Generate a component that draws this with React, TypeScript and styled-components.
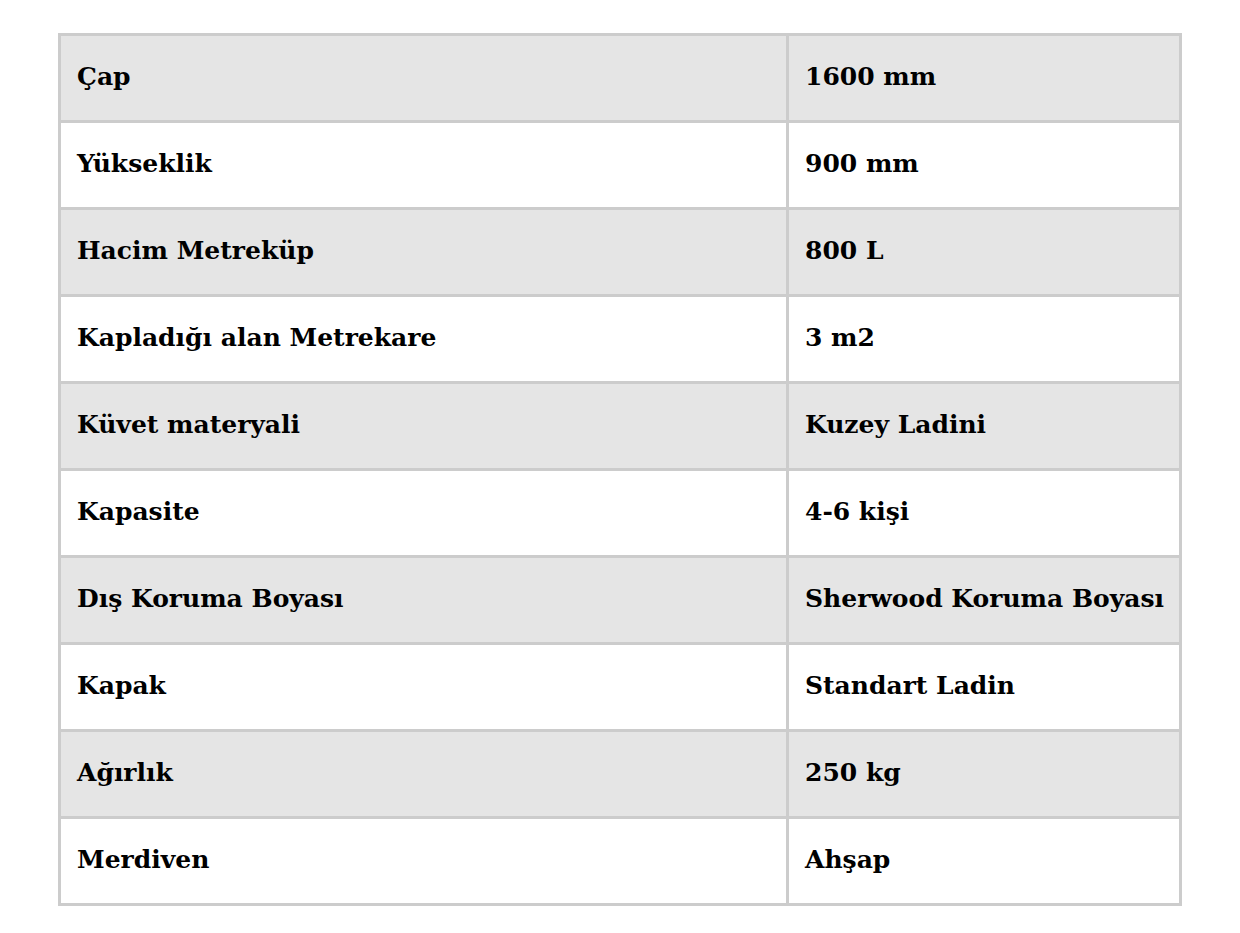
import React from 'react'
import styled, { createGlobalStyle } from 'styled-components'

const GlobalStyle = createGlobalStyle`
  body {
    margin: 0;
    background: #ffffff;
    font-family: "DejaVu Serif", serif;
  }
`

const Page = styled.div`
  padding: 33px 58px;
`

const Table = styled.table`
  width: 100%;
  table-layout: fixed;
  border-collapse: collapse;
  border: 3px solid #cccccc;
`

const Row = styled.tr<{ shaded: boolean }>`
  background: ${(p) => (p.shaded ? '#e5e5e5' : '#ffffff')};
`

const Cell = styled.td<{ first?: boolean }>`
  border: 3px solid #cccccc;
  height: 87px;
  padding: 0 16px 3px;
  box-sizing: border-box;
  font-size: 25px;
  font-weight: bold;
  color: #000000;
  white-space: nowrap;
  width: ${(p) => (p.first ? '728px' : 'auto')};
`

const specs: [string, string][] = [
  ['Çap', '1600 mm'],
  ['Yükseklik', '900 mm'],
  ['Hacim Metreküp', '800 L'],
  ['Kapladığı alan Metrekare', '3 m2'],
  ['Küvet materyali', 'Kuzey Ladini'],
  ['Kapasite', '4-6 kişi'],
  ['Dış Koruma Boyası', 'Sherwood Koruma Boyası'],
  ['Kapak', 'Standart Ladin'],
  ['Ağırlık', '250 kg'],
  ['Merdiven', 'Ahşap'],
]

const App = () => {
  return (
    <Page>
      <GlobalStyle />
      <Table>
        <tbody>
          {specs.map(([label, value], i) => (
            <Row key={label} shaded={i % 2 === 0}>
              <Cell first>{label}</Cell>
              <Cell>{value}</Cell>
            </Row>
          ))}
        </tbody>
      </Table>
    </Page>
  )
}

export default App
